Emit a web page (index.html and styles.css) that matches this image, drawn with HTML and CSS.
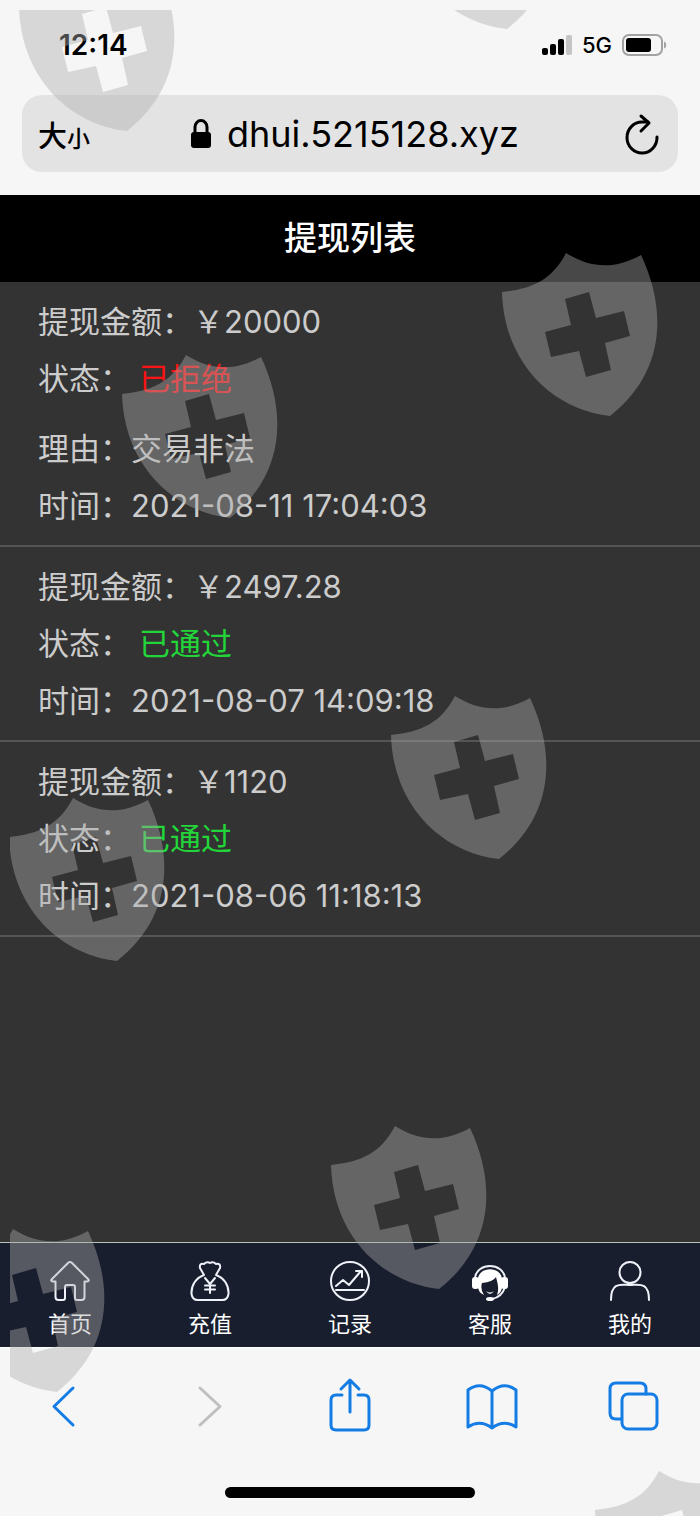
FILE: index.html
```html
<!DOCTYPE html>
<html lang="zh-CN">
  <head>
    <meta charset="UTF-8" />
    <meta name="viewport" content="width=device-width, initial-scale=1.0" />
    <title>提现列表</title>
    <link rel="stylesheet" href="styles.css">
  </head>
  <body>
    <header class="browser-top">
      <div class="status-bar">
        <span class="clock">12:14</span>
        <div class="status-icons">
          <svg class="signal" viewBox="0 0 32 20">
            <rect x="2" y="13" width="6" height="7" rx="2" />
            <rect x="10" y="9" width="6" height="11" rx="2" />
            <rect x="18" y="4" width="6" height="16" rx="2" />
            <rect x="26" y="0" width="6" height="20" rx="2" fill="#c5c5c5" />
          </svg>
          <span>5G</span>
          <svg class="battery" viewBox="0 0 46 22">
            <rect x="1" y="1" width="39" height="20" rx="6" fill="none" stroke="#a2a2a2" stroke-width="2" />
            <rect x="4" y="4" width="25" height="14" rx="3" />
            <path d="M42 7.500C45 8.500 45 13.500 42 14.500z" fill="#a2a2a2" />
          </svg>
        </div>
      </div>
      <div class="address-bar">
        <button type="button" class="text-size">大<small>小</small></button>
        <label class="address">
          <svg class="lock" viewBox="0 0 20 29" aria-label="安全">
            <rect x="0" y="13" width="20" height="16" rx="3" />
            <path d="M4 14V8a6 6.500 0 0 1 12 0v6" fill="none" stroke="#000" stroke-width="3" />
          </svg>
          <input type="text" value="dhui.5215128.xyz" aria-label="网址" />
        </label>
        <button type="button" class="reload" aria-label="刷新">
          <svg viewBox="0 0 36 42" fill="none" stroke="#000" stroke-width="3" stroke-linecap="round" stroke-linejoin="round">
            <path d="M33 24A15 15.500 0 1 1 18 9h6" />
            <path d="M17 3l8 7-8 8" />
          </svg>
        </button>
      </div>
    </header>

    <h1 class="page-title">提现列表</h1>

    <main class="list">
      <section class="item">
        <p>提现金额&#xFF1A;&#xFFE5;20000</p>
        <p>状态&#xFF1A;<span class="status rejected">已拒绝</span></p>
        <p class="reason">理由&#xFF1A;交易非法</p>
        <p>时间&#xFF1A;2021-08-11 17:04:03</p>
      </section>
      <section class="item">
        <p>提现金额&#xFF1A;&#xFFE5;2497.28</p>
        <p>状态&#xFF1A;<span class="status passed">已通过</span></p>
        <p>时间&#xFF1A;2021-08-07 14:09:18</p>
      </section>
      <section class="item">
        <p>提现金额&#xFF1A;&#xFFE5;1120</p>
        <p>状态&#xFF1A;<span class="status passed">已通过</span></p>
        <p>时间&#xFF1A;2021-08-06 11:18:13</p>
      </section>
    </main>

    <nav class="tabbar">
      <a href="#home">
        <svg viewBox="0 0 40 40">
          <path d="M18.500 1.500q1.500-1 3 0L38 18q2 2-1 2.500h-2.500V36q0 3-3 3H27q-2 0-2-2V26q0-2-2-2h-6q-2 0-2 2v11q0 2-2 2H8.500q-3 0-3-3V20.500H3Q0 20 2 18z" />
        </svg>
        首页
      </a>
      <a href="#recharge">
        <svg viewBox="0 0 40 40">
          <path d="M14 14L10 7q-1-5 4-4 3-3 6-1 3-2 6 1 5-1 4 4l-4 7C34 17 39 24 38.500 33q-1 6-6 6h-25q-5 0-6-6C1 24 6 17 14 14z" />
          <path d="M15 17l5 6 5-6M20 23v9M15 24.500h10M15 28.500h10" />
        </svg>
        充值
      </a>
      <a href="#record">
        <svg viewBox="0 0 40 40">
          <circle cx="20" cy="20" r="19" />
          <path d="M6 25l7-6 6 5 12-14M26 10h6v6M6 29h28" />
        </svg>
        记录
      </a>
      <a href="#service">
        <svg viewBox="0 0 40 40">
          <path d="M5 17C7 1 33 1 35 17M35 26q-3 10-13 12" />
          <path class="solid" d="M8 18C9 5 31 5 32 18V27Q31 32 27 34C29 29 28 24 27 20L26 16Q23 21 12 22 10 28 14 34 8 31 8 26z" />
          <rect class="solid" x="2" y="16" width="7" height="12" rx="3" />
          <rect class="solid" x="31" y="16" width="7" height="12" rx="3" />
          <path class="solid" d="M16 30q4 3 8 0-4 6-8 0z" />
          <ellipse class="solid" cx="20" cy="38" rx="4" ry="2" />
        </svg>
        客服
      </a>
      <a href="#mine">
        <svg viewBox="0 0 40 40">
          <circle cx="20" cy="11.500" r="10.500" />
          <path d="M1 39C1 20 12 24 20 24s19-4 19 15" />
        </svg>
        我的
      </a>
    </nav>

    <footer class="browser-bottom">
      <div class="toolbar">
        <button type="button" aria-label="后退">
          <svg viewBox="0 0 60 60"><path d="M33 12L14 30.500 33 49" /></svg>
        </button>
        <button type="button" aria-label="前进" disabled>
          <svg viewBox="0 0 60 60"><path d="M20 12l20 18.500L20 49" /></svg>
        </button>
        <button type="button" aria-label="分享">
          <svg viewBox="0 0 60 60">
            <path d="M22 19h-6q-5 0-5 5v25q0 5 5 5h28q5 0 5-5V24q0-5-5-5h-6M30 36V5M21 13l9-9 9 9" />
          </svg>
        </button>
        <button type="button" aria-label="书签">
          <svg viewBox="0 0 60 60">
            <path d="M32 15v37M32 15Q20 5 8 14v37q12-8 24 1 12-9 24-1V14Q44 5 32 15z" />
          </svg>
        </button>
        <button type="button" aria-label="标签页">
          <svg viewBox="0 0 60 60">
            <path d="M21 43h-5q-6 0-6-6V13q0-6 6-6h24q6 0 6 6v5" />
            <rect x="22" y="18" width="35" height="35" rx="6" />
          </svg>
        </button>
      </div>
      <div class="home-indicator"></div>
    </footer>

    <svg class="watermark" aria-hidden="true">
      <defs>
        <path id="shield" fill-rule="evenodd" d="M0 40C30 37 50 28 64 1C88 16 112 18 139 3C166 60 162 122 108 164C52 158 2 112 0 40zM63 47L87 40L94 66L122 59L128 84L103 91L109 118L84 125L77 99L49 105L43 80L69 73z" />
      </defs>
      <use href="#shield" x="9" y="-43" />
      <use href="#shield" x="389" y="-145" />
      <use href="#shield" x="492" y="242" />
      <use href="#shield" x="112" y="344" />
      <use href="#shield" x="381" y="685" />
      <use href="#shield" x="-1" y="787" />
      <use href="#shield" x="321" y="1115" />
      <use href="#shield" x="-61" y="1218" />
      <use href="#shield" x="585" y="1460" />
    </svg>
  </body>
</html>
```
FILE: styles.css
```css
* {
  margin: 0;
  padding: 0;
  box-sizing: border-box;
}

:root {
  --chrome-bg: #f6f6f6;
  --blue: #147ce5;
  --page-bg: #333;
  --nav-bg: #191e2e;
}

body {
  position: relative;
  min-height: 100vh;
  display: flex;
  flex-direction: column;
  background: var(--page-bg);
  font-family: Inter, "Noto Sans CJK SC", sans-serif;
  overflow-x: hidden;
}

button {
  border: none;
  background: none;
  font-family: inherit;
  color: inherit;
}

svg {
  display: block;
}

/* browser top */
.browser-top {
  background: var(--chrome-bg);
  padding: 0 22px 23px;
}

.status-bar {
  display: flex;
  justify-content: space-between;
  align-items: center;
  height: 95px;
  padding: 0 10px 6px 37px;
}

.clock {
  font-size: 28px;
  font-weight: 600;
}

.status-icons {
  display: flex;
  align-items: center;
  gap: 10px;
  font-size: 22px;
  font-weight: 500;
}

.signal {
  width: 32px;
  height: 20px;
}

.battery {
  width: 46px;
  height: 22px;
}

.address-bar {
  display: flex;
  align-items: center;
  justify-content: space-between;
  height: 77px;
  padding: 0 18px 0 16px;
  border-radius: 20px;
  background: #e3e3e4;
}

.text-size {
  font-size: 29px;
  font-weight: 500;
}

.text-size small {
  font-size: 23px;
}

.address {
  display: flex;
  align-items: center;
  gap: 16px;
}

.address input {
  width: 296px;
  border: none;
  background: none;
  font-family: inherit;
  font-size: 36px;
  color: #000;
}

.lock {
  width: 20px;
  height: 29px;
}

.reload svg {
  width: 36px;
  height: 42px;
}

/* page */
.page-title {
  height: 87px;
  line-height: 87px;
  background: #000;
  color: #fff;
  text-align: center;
  font-size: 33px;
  font-weight: 500;
}

.list {
  flex: 1;
}

.item {
  padding: 11px 38px;
  border-bottom: 2px solid #555;
  color: #ccc;
  font-size: 31px;
  line-height: 57px;
}

.reason {
  margin-top: 13px;
}

.status {
  margin-left: 8px;
}

.rejected {
  color: #f81414;
}

.passed {
  color: #22d63a;
}

.tabbar {
  display: grid;
  grid-template-columns: repeat(5, 1fr);
  height: 106px;
  padding-top: 18px;
  border-top: 1px solid #b4c4b8;
  border-bottom: 1px solid #fff;
  background: var(--nav-bg);
}

.tabbar a {
  display: flex;
  flex-direction: column;
  align-items: center;
  gap: 7px;
  color: #fff;
  text-decoration: none;
  font-size: 22px;
  line-height: 32px;
}

.tabbar svg {
  width: 40px;
  height: 40px;
  fill: none;
  stroke: #f0f2fa;
  stroke-width: 2;
  stroke-linecap: round;
  stroke-linejoin: round;
}

.tabbar .solid {
  fill: #fff;
  stroke: none;
}

/* browser bottom */
.browser-bottom {
  height: 168px;
  padding-top: 28px;
  background: var(--chrome-bg);
}

.toolbar {
  display: grid;
  grid-template-columns: repeat(5, 1fr);
  justify-items: center;
}

.toolbar svg {
  width: 60px;
  height: 60px;
  fill: none;
  stroke: var(--blue);
  stroke-width: 3;
  stroke-linecap: round;
  stroke-linejoin: round;
}

.toolbar button:disabled svg {
  stroke: #bfbfbf;
}

.home-indicator {
  width: 250px;
  height: 11px;
  margin: 51px auto 0;
  border-radius: 6px;
  background: #000;
}

.watermark {
  position: absolute;
  top: 10px;
  left: 10px;
  width: calc(100% - 10px);
  height: calc(100% - 10px);
  overflow: hidden;
  fill: rgba(171, 171, 171, 0.42);
  pointer-events: none;
}
```
